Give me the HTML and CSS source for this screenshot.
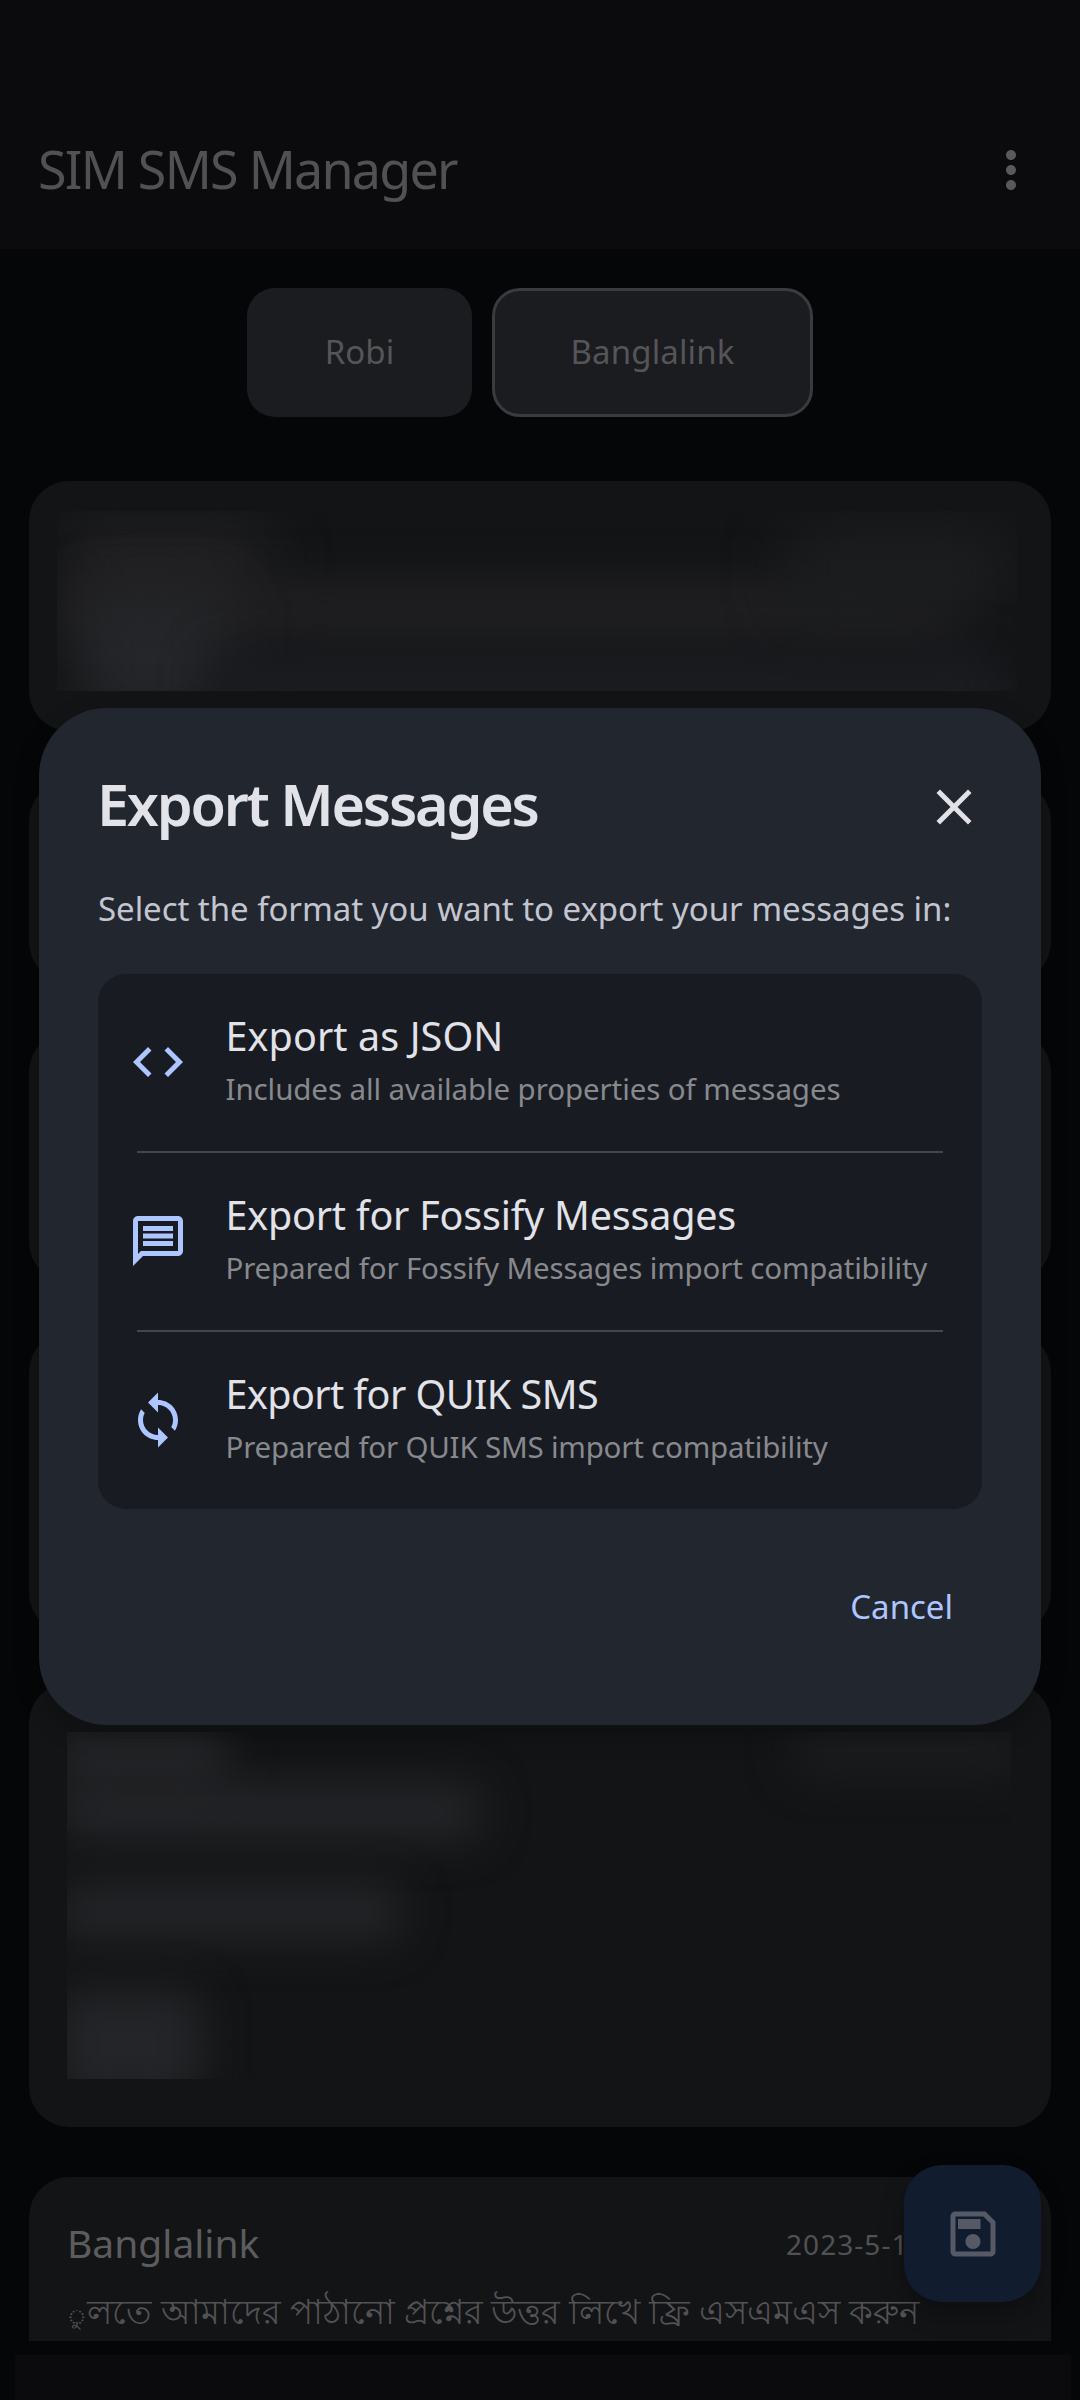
FILE: index.html
```html
<!DOCTYPE html>
<html lang="en">
<head>
<meta charset="utf-8">
<title>SIM SMS Manager</title>
<link rel="stylesheet" href="styles.css">
</head>
<body>
<div class="screen">
  <header class="appbar">
    <h1 class="appbar-title">SIM SMS Manager</h1>
    <svg class="more" viewBox="0 0 24 24"><path d="M12 8c1.1 0 2-.9 2-2s-.9-2-2-2-2 .9-2 2 .9 2 2 2zm0 2c-1.1 0-2 .9-2 2s.9 2 2 2 2-.9 2-2-.9-2-2-2zm0 6c-1.1 0-2 .9-2 2s.9 2 2 2 2-.9 2-2-.9-2-2-2z"/></svg>
  </header>

  <div class="sims">
    <div class="sim sim-robi">Robi</div>
    <div class="sim sim-banglalink">Banglalink</div>
  </div>

  <main class="list">
    <article class="card card-1">
      <div class="redacted redacted-1">
        <i class="blob a1"></i><i class="blob a2"></i><i class="blob a3"></i><i class="blob a4"></i><i class="blob a5"></i>
      </div>
    </article>
    <article class="card card-2"></article>
    <article class="card card-3"></article>
    <article class="card card-4"></article>
    <article class="card card-5">
      <div class="redacted redacted-5">
        <i class="blob b1"></i><i class="blob b2"></i><i class="blob b3"></i><i class="blob b4"></i><i class="blob b5"></i>
      </div>
    </article>
    <article class="card card-6">
      <div class="meta">
        <span class="sender">Banglalink</span>
        <span class="date">2023-5-1</span>
      </div>
      <p class="message" lang="bn"><span class="mark">ু</span>লতে আমাদের পাঠানো প্রশ্নের উত্তর লিখে ফ্রি এসএমএস করুন</p>
    </article>
  </main>

  <div class="navbar"></div>

  <div class="fab">
    <svg viewBox="0 0 24 24"><path d="M17 3H5c-1.11 0-2 .9-2 2v14c0 1.1.89 2 2 2h14c1.1 0 2-.9 2-2V7l-4-4zm2 16H5V5h11.17L19 7.83V19zm-7-7c-1.66 0-3 1.34-3 3s1.34 3 3 3 3-1.34 3-3-1.34-3-3-3zM6 6h9v4H6z"/></svg>
  </div>

  <section class="dialog">
    <div class="dialog-head">
      <h2 class="dialog-title">Export Messages</h2>
      <svg class="close" viewBox="0 0 24 24"><path d="M19 6.41L17.59 5 12 10.59 6.41 5 5 6.41 10.59 12 5 17.59 6.41 19 12 13.41 17.59 19 19 17.59 13.41 12z"/></svg>
    </div>
    <p class="dialog-text">Select the format you want to export your messages in:</p>
    <div class="options">
      <div class="option">
        <svg viewBox="0 0 24 24"><path d="M9.4 16.6L4.8 12l4.6-4.6L8 6l-6 6 6 6 1.4-1.4zm5.2 0l4.6-4.6-4.6-4.6L16 6l6 6-6 6-1.4-1.4z"/></svg>
        <div class="option-text">
          <div class="option-title">Export as JSON</div>
          <div class="option-sub">Includes all available properties of messages</div>
        </div>
      </div>
      <hr class="divider">
      <div class="option">
        <svg viewBox="0 0 24 24"><path d="M4 4h16v12H5.17L4 17.17V4m0-2c-1.1 0-1.99.9-1.99 2L2 22l4-4h14c1.1 0 2-.9 2-2V4c0-1.1-.9-2-2-2H4zm2 10h12v2H6v-2zm0-3h12v2H6V9zm0-3h12v2H6V6z"/></svg>
        <div class="option-text">
          <div class="option-title fossify">Export for Fossify Messages</div>
          <div class="option-sub fossify-sub">Prepared for Fossify Messages import compatibility</div>
        </div>
      </div>
      <hr class="divider">
      <div class="option">
        <svg viewBox="0 0 24 24"><path d="M12 4V1L8 5l4 4V6c3.31 0 6 2.69 6 6 0 1.01-.25 1.97-.7 2.8l1.46 1.46C19.54 15.03 20 13.57 20 12c0-4.42-3.58-8-8-8zm0 14c-3.31 0-6-2.69-6-6 0-1.01.25-1.97.7-2.8L5.24 7.74C4.46 8.97 4 10.43 4 12c0 4.42 3.58 8 8 8v3l4-4-4-4v3z"/></svg>
        <div class="option-text">
          <div class="option-title quik">Export for QUIK SMS</div>
          <div class="option-sub quik-sub">Prepared for QUIK SMS import compatibility</div>
        </div>
      </div>
    </div>
    <div class="dialog-actions"><span class="cancel">Cancel</span></div>
  </section>
</div>
</body>
</html>
```
FILE: styles.css
```css
* { box-sizing: border-box; }

body {
  margin: 0;
  background: #050608;
  font-family: "Noto Sans", sans-serif;
}

h1, h2, p { margin: 0; font-weight: 400; }

.screen {
  position: relative;
  width: 1080px;
  height: 2400px;
  display: flex;
  flex-direction: column;
  overflow: hidden;
  white-space: nowrap;
}

/* App bar */
.appbar {
  height: 249px;
  padding: 88px 39px 0 38px;
  display: flex;
  align-items: center;
  justify-content: space-between;
  background: #0b0b0d;
}
.appbar-title {
  font-size: 52px;
  letter-spacing: -1.75px;
  color: #515153;
}
.more {
  width: 60px;
  height: 60px;
  margin-top: 3px;
  fill: #59595b;
}

/* SIM selector */
.sims {
  height: 232px;
  padding: 39px 20px 0 0;
  display: flex;
  justify-content: center;
  align-items: flex-start;
  gap: 20px;
}
.sim {
  height: 129px;
  padding-bottom: 2px;
  display: flex;
  align-items: center;
  justify-content: center;
  border-radius: 28px;
  background: #1b1c20;
  color: #555558;
  font-size: 33px;
}
.sim-robi { width: 225px; }
.sim-banglalink { width: 321px; border: 3px solid #3a3b3f; letter-spacing: .15px; }

/* Message list */
.list {
  height: 1860px;
  padding: 0 29px;
  display: flex;
  flex-direction: column;
  gap: 50px;
  overflow: hidden;
}
.card {
  flex-shrink: 0;
  border-radius: 40px;
  background: #131416;
}
.card-1 { height: 250px; padding: 30px 34px 0 28px; }
.card-2 { height: 201px; }
.card-3 { height: 250px; }
.card-4 { height: 301px; }
.card-5 { height: 444px; padding: 49px 40px 0 38px; }
.card-6 { height: 260px; padding: 39px 38px 0; }

/* Blurred-out message contents */
.redacted { position: relative; overflow: hidden; }
.redacted-1 { height: 180px; }
.redacted-5 { height: 347px; }
.blob {
  position: absolute;
  background: #242528;
  border-radius: 20px;
  filter: blur(22px);
}
.a1 { left: 10px; top: 10px; width: 200px; height: 90px; background: #212123; filter: blur(28px); }
.a2 { left: 10px; top: 70px; width: 890px; height: 60px; background: #202022; }
.a3 { left: 20px; top: 80px; width: 150px; height: 130px; background: #252629; filter: blur(28px); }
.a4 { left: 730px; top: 15px; width: 220px; height: 90px; background: #1c1d1f; filter: blur(28px); }
.a5 { left: 150px; top: 140px; width: 800px; height: 80px; background: #1b1c20; }
.b1 { left: -10px; top: -10px; width: 170px; height: 65px; }
.b2 { left: -10px; top: 52px; width: 425px; height: 56px; }
.b3 { left: -10px; top: 152px; width: 345px; height: 56px; }
.b4 { left: -10px; top: 258px; width: 145px; height: 110px; }
.b5 { left: 725px; top: -10px; width: 230px; height: 52px; background: #1c1d1e; }

.meta { display: flex; align-items: center; height: 54px; }
.sender { width: 719px; font-size: 39px; line-height: 54px; color: #5c5c5e; }
.date { padding-top: 2px; font-size: 28px; letter-spacing: 1.05px; color: #515153; }
.message { margin-top: 18px; font-size: 34px; line-height: 46px; color: #525255; }
.mark { font-size: 21px; }

.navbar {
  height: 45px;
  margin: 14px 9px 0 15px;
  background: #0b0b0d;
}

/* Floating save button */
.fab {
  position: absolute;
  left: 904px;
  top: 2165px;
  width: 137px;
  height: 137px;
  display: flex;
  align-items: center;
  justify-content: center;
  border-radius: 38px;
  background: #111c2f;
  box-shadow: 0 12px 24px rgba(0, 0, 0, .3);
}
.fab svg { width: 60px; height: 60px; fill: #555a66; }

/* Export dialog */
.dialog {
  position: absolute;
  left: 39px;
  top: 708px;
  width: 1002px;
  height: 1017px;
  padding: 69px 59px 0;
  border-radius: 68px;
  background: #22262f;
  box-shadow: 0 10px 24px rgba(0, 0, 0, .25);
}
.dialog-head {
  height: 60px;
  display: flex;
  align-items: center;
  justify-content: space-between;
}
.dialog-title {
  margin-left: -1px;
  padding-bottom: 6px;
  font-size: 57.5px;
  line-height: 60px;
  font-weight: 600;
  letter-spacing: -2.25px;
  color: #e2e2e9;
}
.close { width: 60px; height: 60px; margin-right: -2px; fill: #e2e2e6; }
.dialog-text {
  margin-top: 50px;
  font-size: 33px;
  line-height: 44px;
  letter-spacing: -.05px;
  color: #c3c5d0;
}
.options {
  height: 534.5px;
  margin-top: 43px;
  border-radius: 28px;
  background: #181b22;
}
.option {
  height: 176.5px;
  padding-left: 29.5px;
  display: flex;
  align-items: center;
  gap: 38px;
}
.option svg { width: 60px; height: 60px; flex-shrink: 0; fill: #adc6ff; }
.option-text { padding-bottom: 7px; }
.option-title { font-size: 39.5px; line-height: 54px; letter-spacing: .1px; color: #e2e2e9; }
.option-sub {
  margin-top: 6px;
  font-size: 29.5px;
  line-height: 40px;
  letter-spacing: -.09px;
  color: #88898d;
}
.option-title.fossify { letter-spacing: -.2px; }
.option-sub.fossify-sub { letter-spacing: -.17px; }
.option-title.quik { letter-spacing: -.55px; }
.option-sub.quik-sub { letter-spacing: -.21px; }
.divider {
  height: 2.5px;
  margin: 0 39px;
  border: 0;
  background: #44464f;
}
.dialog-actions {
  margin-top: 76.5px;
  padding-right: 29px;
  display: flex;
  justify-content: flex-end;
}
.cancel { font-size: 33px; line-height: 44px; color: #adc6ff; }
```
